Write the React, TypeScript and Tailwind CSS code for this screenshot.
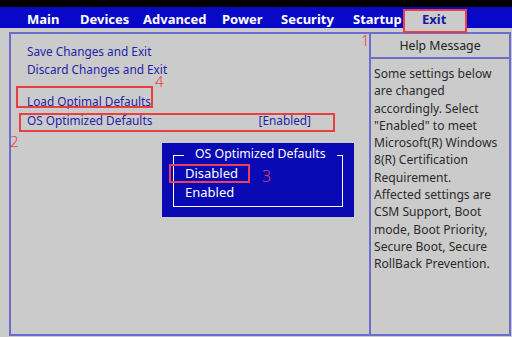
import React from "react";

const menu: [string, string][] = [
  ["Main", "w-[53px]"],
  ["Devices", "w-[63px]"],
  ["Advanced", "w-[79px]"],
  ["Power", "w-[59px]"],
  ["Security", "w-[72px]"],
  ["Startup", "w-[50px]"],
];

const help = [
  "Some settings below",
  "are changed",
  "accordingly. Select",
  "\"Enabled\" to meet",
  "Microsoft(R) Windows",
  "8(R) Certification",
  "Requirement.",
  "Affected settings are",
  "CSM Support, Boot",
  "mode, Boot Priority,",
  "Secure Boot, Secure",
  "RollBack Prevention.",
];

export default function App() {
  return (
    <div
      className="relative w-[512px] h-[337px] overflow-hidden bg-[#cbcbcb] flex flex-col"
      style={{ fontFamily: '"Noto Sans", "Open Sans", sans-serif' }}
    >
      <div className="h-[7px] bg-black shrink-0" />
      <div className="h-[21px] bg-[#0808c8] shrink-0 flex items-stretch pl-[27px] text-white font-bold text-[13px] leading-none">
        {menu.map(([m, w]) => (
          <span key={m} className={`${w} shrink-0 flex items-center pt-[3px] whitespace-nowrap`}>{m}</span>
        ))}
        <span className="w-[64px] mt-[3px] pl-[19px] bg-[#cbcbcb] text-[#1a1aa0] flex items-center">Exit</span>
      </div>
      <div className="flex-1 pt-[4px] pl-[9px] pr-[1px] pb-[1px] flex">
        <div className="flex-1 flex border-2 border-[#6d6dcc]">
          <div className="w-[358px] pt-[8px] pl-[16px] text-[#2424a8] text-[11.8px] leading-[18px]">
            <div>Save Changes and Exit</div>
            <div>Discard Changes and Exit</div>
            <div className="mt-[14px]">Load Optimal Defaults</div>
            <div className="mt-[1px] flex w-[284px] justify-between">
              <span>OS Optimized Defaults</span>
              <span>[Enabled]</span>
            </div>
          </div>
          <div className="flex-1 flex flex-col border-l-2 border-[#6d6dcc]">
            <div className="h-[25px] pt-[2px] flex items-center justify-center border-b-2 border-[#6d6dcc] text-[#222] text-[12.3px]">
              Help Message
            </div>
            <div className="pl-[3px] pt-[6px] text-[#2a2a2a] text-[12.1px] leading-[17.3px]">
              {help.map((h) => (
                <div key={h}>{h}</div>
              ))}
            </div>
          </div>
        </div>
      </div>

      {/* popup */}
      <div className="absolute left-[162px] top-[143px] w-[192px] h-[74px] bg-[#0a0ab4] p-[11px] pt-[12px]">
        <div className="relative h-[52px] border border-white border-t-0">
          <div className="absolute -top-[7px] h-[14px] left-0 right-0 flex items-center">
            <div className="w-[10px] h-px bg-white" />
            <span className="px-[11px] -mt-[2px] text-white text-[12.3px] leading-none whitespace-nowrap">OS Optimized Defaults</span>
            <div className="flex-1 h-px bg-white" />
          </div>
          <div className="pt-[9px] pl-[11px] text-white text-[13px] leading-[19px]">
            <div>Disabled</div>
            <div>Enabled</div>
          </div>
        </div>
      </div>

      {/* annotations */}
      <div className="absolute left-[403px] top-[9px] w-[64px] h-[24px] border-2 border-[#e84040]" />
      <div className="absolute left-[361px] top-[33px] text-[#e84040] text-[15px] font-light leading-none">1</div>
      <div className="absolute left-[16px] top-[86px] w-[137px] h-[22px] border-2 border-[#e84040]" />
      <div className="absolute left-[155px] top-[74px] text-[#e84040] text-[15px] font-light leading-none">4</div>
      <div className="absolute left-[19px] top-[113px] w-[316px] h-[19px] border-2 border-[#e84040]" />
      <div className="absolute left-[10px] top-[134px] text-[#e84040] text-[15px] font-light leading-none">2</div>
      <div className="absolute left-[169px] top-[164px] w-[81px] h-[19px] border-2 border-[#e8405a]" />
      <div className="absolute left-[262px] top-[168px] text-[#d0407a] text-[16px] font-light leading-none">3</div>
    </div>
  );
}
